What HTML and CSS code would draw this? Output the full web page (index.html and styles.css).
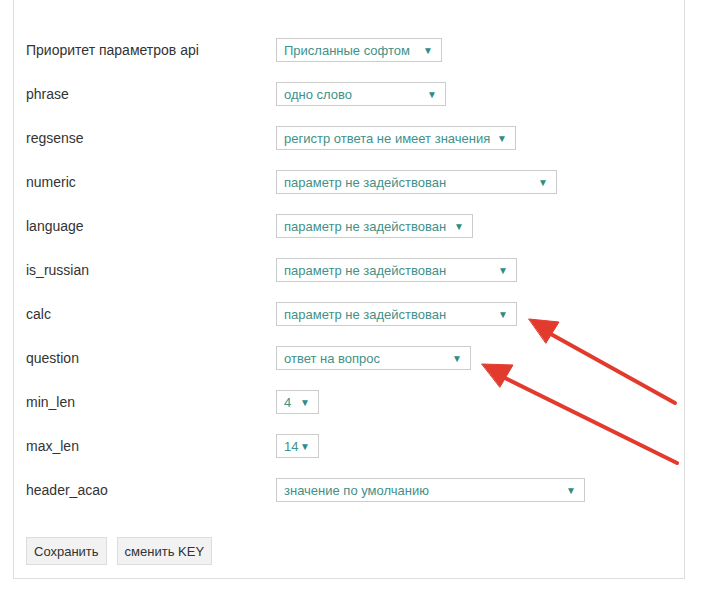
FILE: index.html
```html
<!DOCTYPE html>
<html lang="en">

<head>
    <meta charset="UTF-8">
    <meta name="viewport" content="width=device-width, initial-scale=1.0">
    <title>Настройки</title>
    <link rel="stylesheet" href="styles.css">
</head>

<body>
    <div class="panel">
        <div class="row">
            <div class="label">Приоритет параметров api</div>
            <div class="select w1">Присланные софтом<span class="caret">▼</span></div>
        </div>
        <div class="row">
            <div class="label">phrase</div>
            <div class="select w2">одно слово<span class="caret">▼</span></div>
        </div>
        <div class="row">
            <div class="label">regsense</div>
            <div class="select w3">регистр ответа не имеет значения<span class="caret">▼</span></div>
        </div>
        <div class="row">
            <div class="label">numeric</div>
            <div class="select w4">параметр не задействован<span class="caret">▼</span></div>
        </div>
        <div class="row">
            <div class="label">language</div>
            <div class="select w5">параметр не задействован<span class="caret">▼</span></div>
        </div>
        <div class="row">
            <div class="label">is_russian</div>
            <div class="select w6">параметр не задействован<span class="caret">▼</span></div>
        </div>
        <div class="row">
            <div class="label">calc</div>
            <div class="select w6">параметр не задействован<span class="caret">▼</span></div>
        </div>
        <div class="row">
            <div class="label">question</div>
            <div class="select w8">ответ на вопрос<span class="caret">▼</span></div>
        </div>
        <div class="row">
            <div class="label">min_len</div>
            <div class="select w9">4<span class="caret">▼</span></div>
        </div>
        <div class="row">
            <div class="label">max_len</div>
            <div class="select w9">14<span class="caret">▼</span></div>
        </div>
        <div class="row">
            <div class="label">header_acao</div>
            <div class="select w11">значение по умолчанию<span class="caret">▼</span></div>
        </div>
        <div class="buttons">
            <button>Сохранить</button>
            <button>сменить KEY</button>
        </div>
    </div>

    <svg class="arrows" width="703" height="600" viewBox="0 0 703 600">
        <g stroke="#e23b2e" stroke-width="4" stroke-linecap="round" fill="#e23b2e">
            <line x1="675" y1="403" x2="540" y2="328" />
            <polygon points="529,319 559,322 546,343" stroke-width="1" />
            <line x1="677" y1="463" x2="493" y2="372" />
            <polygon points="482,364 513,365 500,387" stroke-width="1" />
        </g>
    </svg>
</body>

</html>
```

FILE: styles.css
```css
body {
    margin: 0;
    font-family: "Liberation Sans", Arial, sans-serif;
    color: #333;
    background: #fff;
}

.panel {
    margin-left: 13px;
    width: 672px;
    border: 1px solid #ddd;
    border-top: none;
    padding: 28px 12px 13px 12px;
    box-sizing: border-box;
}

.row {
    display: flex;
    align-items: center;
    height: 44px;
}

.label {
    width: 250px;
    font-size: 14px;
}

/* fake select boxes */
.select {
    display: flex;
    align-items: center;
    justify-content: space-between;
    height: 24px;
    box-sizing: border-box;
    border: 1px solid #ccc;
    padding: 0 8px 0 7px;
    font-size: 13px;
    color: #3f918a;
}

.caret {
    font-size: 10px;
    color: #2e8c84;
}

.w1 { width: 166px; }
.w2 { width: 170px; }
.w3 { width: 240px; }
.w4 { width: 281px; }
.w5 { width: 197px; }
.w6 { width: 241px; }
.w8 { width: 195px; }
.w9 { width: 43px; }
.w11 { width: 309px; }

.buttons {
    display: flex;
    gap: 10px;
    margin-top: 25px;
}

button {
    height: 28px;
    padding: 0 7px;
    font-family: "Liberation Sans", Arial, sans-serif;
    font-size: 13px;
    color: #333;
    background: #f2f2f2;
    border: 1px solid #ddd;
    border-radius: 0;
}

.arrows {
    position: absolute;
    left: 0;
    top: 0;
    pointer-events: none;
}
```
